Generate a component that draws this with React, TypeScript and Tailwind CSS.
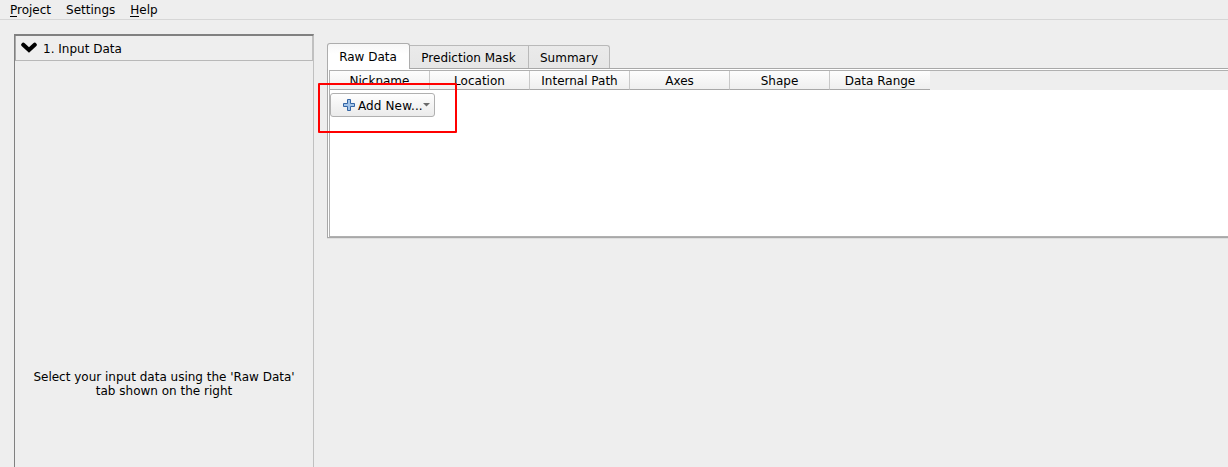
const menus = ['Project', 'Settings', 'Help'];
const columns = ['Nickname', 'Location', 'Internal Path', 'Axes', 'Shape', 'Data Range'];

function MenuBar() {
  return (
    <nav className="flex h-5 shrink-0 gap-[15px] border-b border-[#d6d6d6] pl-[10px] leading-[21px]">
      {menus.map((m) => (
        <span key={m} className="relative">
          {m}
          {m !== 'Settings' && (
            <span className={`absolute left-0 top-[16px] h-px bg-black ${m === 'Help' ? 'w-[9px]' : 'w-[7px]'}`} />
          )}
        </span>
      ))}
    </nav>
  );
}

function Sidebar() {
  return (
    <aside className="flex w-[300px] shrink-0 flex-col border-l border-r border-t-2 border-l-[#808080] border-r-[#c0c0c0] border-t-[#808080]">
      <div className="flex h-[25px] shrink-0 items-center border-b border-l border-r border-b-[#b8b8b8] border-l-[#a8a8a8] border-r-[#c0c0c0] pl-[5px]">
        <svg width="16" height="12" viewBox="0 0 16 12" fill="none" stroke="#000" strokeWidth="4.2" strokeLinecap="round" strokeLinejoin="miter">
          <path d="M2.3 2.8 L8 8 L13.7 2.8" />
        </svg>
        <span className="ml-[6px] pt-0.5">1. Input Data</span>
      </div>
      <p className="mt-[309px] text-center leading-[14px]">
        Select your input data using the 'Raw Data'
        <br />
        tab shown on the right
      </p>
    </aside>
  );
}

function AddButton() {
  return (
    <button className="mt-[3px] flex h-6 w-[105px] items-center rounded-[3px] border border-[#b0b0b0] bg-linear-to-b from-[#fefefe] to-[#ebebeb] pl-3">
      <svg width="13" height="13" viewBox="0 0 13 13">
        <path d="M4.5 .5h3v4h4v3h-4v4h-3v-4h-4v-3h4z" fill="#a3c4e8" stroke="#3465a4" />
      </svg>
      <span className="ml-[2px] pt-0.5 tracking-[0.12px]">Add New...</span>
      <svg className="mb-0.5" width="7" height="5" viewBox="0 0 7 5">
        <path d="M0 1h7L3.5 4.5z" fill="#6a6a6a" />
      </svg>
    </button>
  );
}

export default function App() {
  return (
    <div className="relative flex h-[467px] w-full flex-col overflow-hidden bg-[#eeeeee] font-['DejaVu_Sans',sans-serif] text-[12px] text-black">
      <MenuBar />
      <div className="flex min-h-0 flex-1 pl-[14px] pt-[14px]">
        <Sidebar />
        <main className="ml-[13px] min-w-0 flex-1 pt-[9px]">
          <div className="relative z-10 flex h-[25px] items-end">
            <div className="-mb-px h-[26px] w-[83px] rounded-t-[3px] border border-b-0 border-[#adadad] bg-linear-to-b from-[#f7f7f7] to-white to-40% pr-px text-center leading-[26px]">
              Raw Data
            </div>
            <div className="h-[23px] w-[119px] border border-b-0 border-l-0 border-[#b9b9b9] bg-linear-to-b from-[#eaeaea] to-[#e6e6e6] pr-px text-center leading-[25px]">
              Prediction Mask
            </div>
            <div className="h-[23px] w-[81px] rounded-tr-[3px] border border-b-0 border-l-0 border-[#b9b9b9] bg-linear-to-b from-[#eaeaea] to-[#e6e6e6] text-center leading-[25px]">
              Summary
            </div>
          </div>
          <div className="h-[170px] border-y border-l border-[#a8a8a8] bg-white pl-px pt-px shadow-[0_1px_0_#dfdfdf]">
            <div className="h-[167px] border-y border-l border-[#b0b0b0] bg-white">
              <div className="flex h-[19px] bg-[#eeeeee]">
                {columns.map((c, i) => (
                  <div
                    key={c}
                    className={`w-[100px] shrink-0 border-b border-b-[#a8a8a8] bg-linear-to-b from-[#fdfdfd] to-[#efefef] text-center leading-[21px] ${i < 5 ? 'border-r border-r-[#c8c8c8]' : ''}`}
                  >
                    {c}
                  </div>
                ))}
              </div>
              <AddButton />
            </div>
          </div>
        </main>
      </div>
      <div className="pointer-events-none absolute left-[318px] top-[83px] z-20 h-[50px] w-[139px] rounded-[1px] border-2 border-[#ff0000]" />
    </div>
  );
}
